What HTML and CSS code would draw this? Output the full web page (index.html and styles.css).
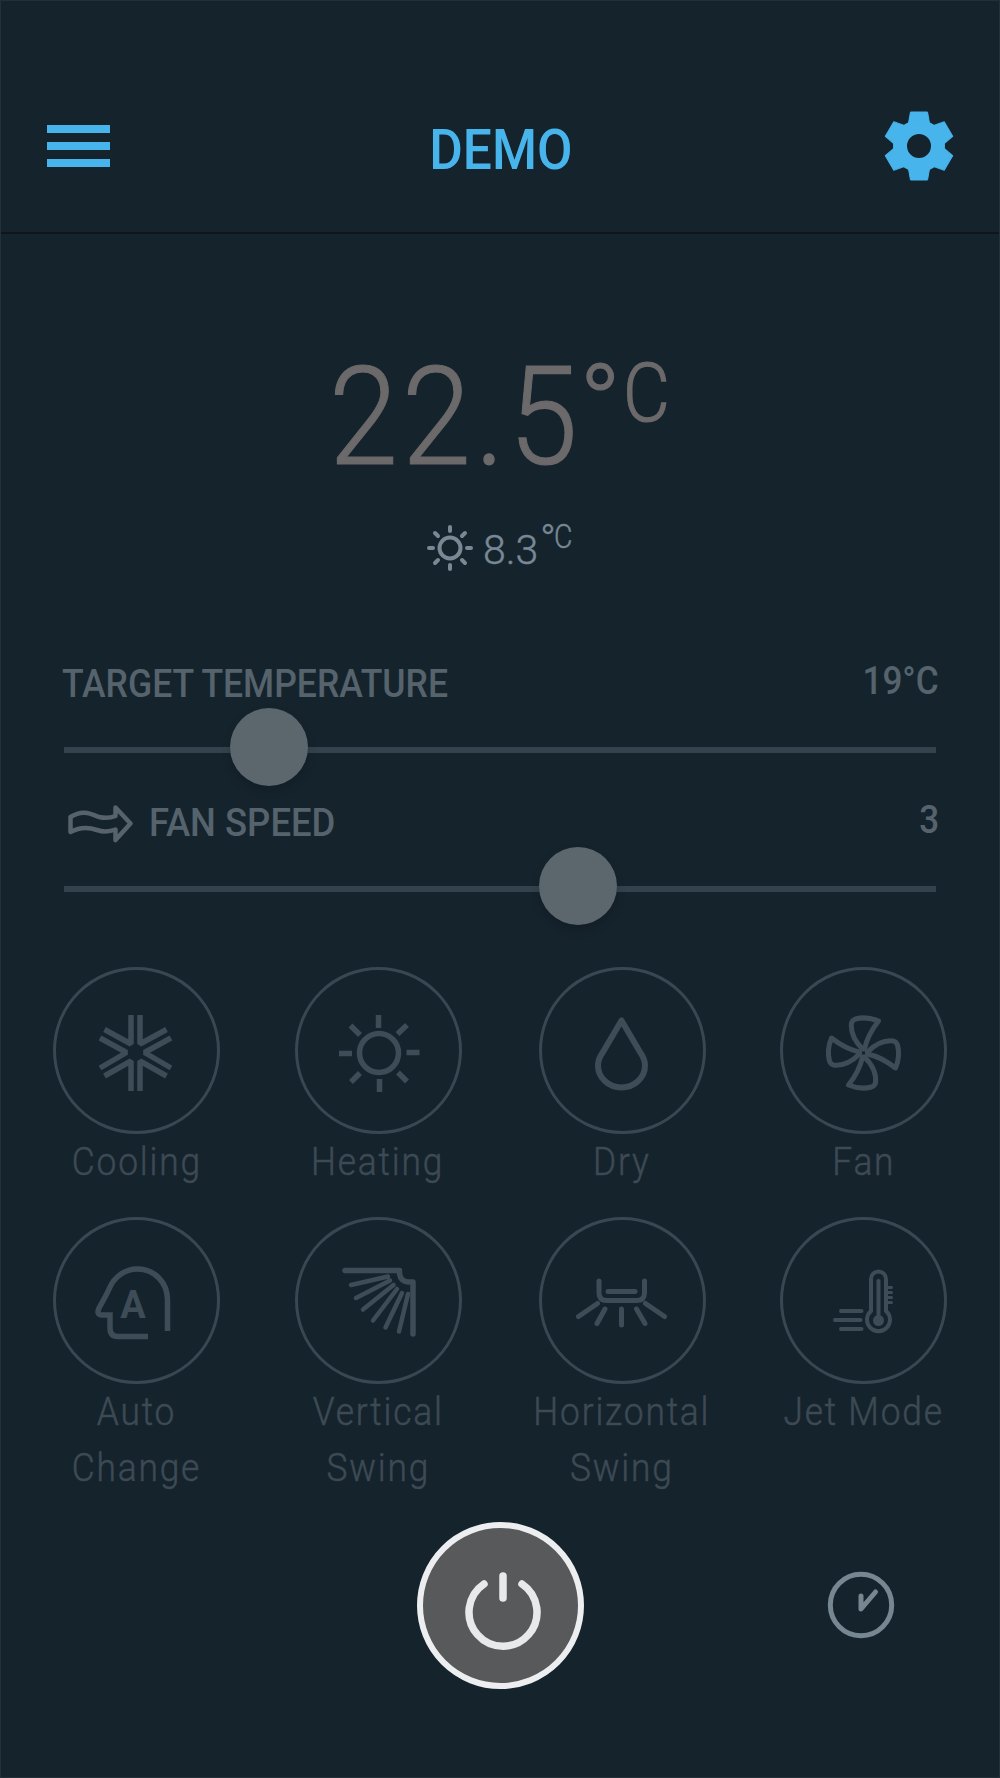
FILE: index.html
```html
<!DOCTYPE html>
<html lang="en">

<head>
    <meta charset="UTF-8">
    <meta name="viewport" content="width=device-width, initial-scale=1.0">
    <title>Demo</title>
    <link rel="stylesheet" href="styles.css">
</head>

<body>
    <div class="app">
        <header class="header">
            <button class="menu-btn" aria-label="Menu">
                <span></span>
                <span></span>
                <span></span>
            </button>
            <h1 class="title">DEMO</h1>
            <button class="settings-btn" aria-label="Settings">
                <svg width="70" height="70" viewBox="-35 -35 70 70">
                    <defs>
                        <path id="tooth" d="M-11 -20 L-8.5 -34 H8.5 L11 -20 Z" />
                    </defs>
                    <g fill="#47b4ec" stroke="#47b4ec" stroke-width="1" stroke-linejoin="round">
                        <use href="#tooth" />
                        <use href="#tooth" transform="rotate(60)" />
                        <use href="#tooth" transform="rotate(120)" />
                        <use href="#tooth" transform="rotate(180)" />
                        <use href="#tooth" transform="rotate(240)" />
                        <use href="#tooth" transform="rotate(300)" />
                    </g>
                    <circle r="19" fill="none" stroke="#47b4ec" stroke-width="14" />
                </svg>
            </button>
        </header>

        <!-- Current temperatures -->
        <section class="readings">
            <div class="indoor">
                <span class="indoor-value">22.5</span>
                <span class="indoor-degree">°</span>
                <span class="indoor-unit">C</span>
            </div>
            <div class="outdoor">
                <svg width="48" height="48" viewBox="-24 -24 48 48" fill="none" stroke="#788995" stroke-width="4" stroke-linecap="round">
                    <circle r="10.500" />
                    <path d="M0 -21V-17M0 17V21M-21 0H-17M17 0H21M-15 -15L-12 -12M15 -15L12 -12M-15 15L-12 12M15 15L12 12" />
                </svg>
                <span class="outdoor-value">8.3</span>
                <span class="outdoor-degree">°</span>
                <span class="outdoor-unit">C</span>
            </div>
        </section>

        <!-- Sliders -->
        <section class="sliders">
            <div class="slider">
                <div class="slider-head">
                    <span class="slider-label target">TARGET TEMPERATURE</span>
                    <span class="slider-value">19°C</span>
                </div>
                <div class="track">
                    <div class="knob" style="left: 23.55%"></div>
                </div>
            </div>
            <div class="slider">
                <div class="slider-head">
                    <svg class="wind" width="66" height="38" viewBox="0 0 66 38" fill="none" stroke="#56636c" stroke-width="4.500" stroke-linejoin="round">
                        <path d="M2.500 12C15 4 23 9 31 12Q40 14 47.500 11V2.500L62.500 18.500L47.500 35V24.500Q38 28 29 25Q15 20 2.500 27Z" />
                    </svg>
                    <span class="slider-label fan">FAN SPEED</span>
                    <span class="slider-value">3</span>
                </div>
                <div class="track">
                    <div class="knob" style="left: 58.9%"></div>
                </div>
            </div>
        </section>

        <!-- Modes -->
        <section class="modes">
            <div class="mode">
                <div class="circle">
                    <svg viewBox="0 0 166 166" stroke-width="5.500" stroke-linejoin="bevel">
                        <path d="M78 48V77L51.500 62.500M87 48V77L113.500 62.500M78 124V94L51.500 109M87 124V94L113.500 109M47 71L73.500 85.500L47 101M118 71L91.500 85.500L118 101" />
                    </svg>
                </div>
                <span class="mode-label">Cooling</span>
            </div>
            <div class="mode">
                <div class="circle">
                    <svg viewBox="0 0 166 166" stroke-width="5.500">
                        <circle cx="84" cy="86" r="19.500" />
                        <path d="M83.500 48V61M84.500 112V125M44 86.500H57M111.500 85.500H124.500M55.500 58.500L65 68M112 58L102.500 67M56 115L65 106M112 114.500L103 105.500" />
                    </svg>
                </div>
                <span class="mode-label">Heating</span>
            </div>
            <div class="mode">
                <div class="circle">
                    <svg viewBox="0 0 166 166" stroke-width="6" stroke-linejoin="round">
                        <path d="M82.500 53.500L64 85Q59 92 59 98.500A23.500 22 0 0 0 106 98.500Q106 92 101 85Z" />
                    </svg>
                </div>
                <span class="mode-label">Dry</span>
            </div>
            <div class="mode">
                <div class="circle">
                    <svg viewBox="0 0 166 166" stroke-width="5" stroke-linejoin="round">
                        <defs>
                            <path id="blade" d="M-1 -4C-10 -13 -13 -22 -12 -30Q-11 -33 -8 -34Q3 -37 15 -32Q4 -18 1 -4Z" />
                        </defs>
                        <g transform="translate(83.500 86)">
                            <use href="#blade" />
                            <use href="#blade" transform="rotate(90)" />
                            <use href="#blade" transform="rotate(180)" />
                            <use href="#blade" transform="rotate(270)" />
                        </g>
                    </svg>
                </div>
                <span class="mode-label">Fan</span>
            </div>
            <div class="mode">
                <div class="circle">
                    <svg viewBox="0 0 166 166" stroke-width="5.500">
                        <path d="M114.500 114V83C114.500 65 101 52 84.500 52C71 52 61 61 57 70Q54 77 46 91Q43 98 49 98H57V111Q57 119.500 65 119.500H95" />
                        <text class="icon-letter" x="80" y="101" text-anchor="middle">A</text>
                    </svg>
                </div>
                <span class="mode-label">Auto<br>Change</span>
            </div>
            <div class="mode">
                <div class="circle">
                    <svg viewBox="0 0 166 166" stroke-width="5.500" stroke-linecap="round" stroke-linejoin="round">
                        <path d="M50 53.500H104.500V57Q106 64.500 113 65H118V117" />
                        <path stroke-width="4.500" d="M93 59.500L56 68M95 63.500L61 81M98.500 68L68 92.500M102 72L78 103.500M107 76L90.500 110.500M113 77L104 114.500" />
                    </svg>
                </div>
                <span class="mode-label">Vertical<br>Swing</span>
            </div>
            <div class="mode">
                <div class="circle">
                    <svg viewBox="0 0 166 166" stroke-width="5" stroke-linecap="round">
                        <path d="M60 64V76Q60 83.500 68 83.500H97.500Q105.500 83.500 105.500 76V64M69 74.500H96M58.500 86.500L39.500 99.500M106.500 86.500L125.500 99.500M66 92L58 106.500M82.500 92V108M97.500 92L106 106.500" />
                    </svg>
                </div>
                <span class="mode-label">Horizontal<br>Swing</span>
            </div>
            <div class="mode">
                <div class="circle">
                    <svg viewBox="0 0 166 166" stroke-width="4" stroke-linecap="round">
                        <path d="M91 94V62A7.500 7.500 0 0 1 106 62V94A11.500 11.500 0 1 1 91 94Z" />
                        <path d="M98.500 64V103.500" />
                        <circle cx="98.500" cy="103.500" r="3" stroke-width="5" />
                        <path stroke-width="3" d="M107 70.500H111.500M107 75.500H111.500M107 80.500H111.500M107 85.500H111.500" />
                        <path d="M61 94H81.500M55 103H80.500M61 112H81.500" />
                    </svg>
                </div>
                <span class="mode-label">Jet Mode</span>
            </div>
        </section>

        <footer class="footer">
            <button class="power-btn" aria-label="Power">
                <svg width="84" height="84" viewBox="-42 -42 84 84" fill="none" stroke="#e8e9ea" stroke-width="7.500" stroke-linecap="round">
                    <path d="M-19 -28A34 34 0 1 0 19 -28M0 -36V-14" />
                </svg>
            </button>
            <button class="timer-btn" aria-label="Timer">
                <svg width="68" height="68" viewBox="-34 -34 68 68" fill="none" stroke="#768792" stroke-width="5" stroke-linecap="round" stroke-linejoin="round">
                    <circle r="30.700" />
                    <path d="M0 -9V4L14.500 -13" />
                </svg>
            </button>
        </footer>
    </div>
</body>

</html>
```
FILE: styles.css
```css
* {
    box-sizing: border-box;
}

body {
    margin: 0;
    background-color: #15232d;
    font-family: Roboto, Arial, sans-serif;
}

.app {
    width: 1000px;
    height: 1778px;
    overflow: hidden;
    border: 1px solid #22303a;
}

button {
    padding: 0;
    border: none;
    background: none;
    cursor: pointer;
}

svg {
    display: block;
}

/* Header */
.header {
    display: flex;
    justify-content: space-between;
    align-items: center;
    height: 233px;
    padding: 59px 45px 0 46px;
    border-bottom: 2px solid #0e161c;
}

.menu-btn {
    display: flex;
    flex-direction: column;
    gap: 9px;
    width: 63px;
}

.menu-btn span {
    height: 8px;
    background-color: #47b4ec;
}

.title {
    margin: 8px 0 0 8px;
    font-size: 56px;
    font-weight: 500;
    line-height: 60px;
    color: #47b4ec;
    transform: scaleX(0.92);
}

/* Current temperatures */
.readings {
    height: 400px;
    padding-top: 113px;
}

.indoor {
    display: flex;
    height: 150px;
    padding-left: 328px;
    color: #6c696a;
    font-weight: 300;
    -webkit-text-stroke: 1.2px #6c696a;
}

.indoor-value {
    width: 250px;
    font-size: 138px;
    line-height: 140px;
    letter-spacing: 4.5px;
    transform: scaleX(0.9);
    transform-origin: left;
}

.indoor-degree {
    width: 44px;
    font-size: 112px;
    line-height: 116px;
}

.indoor-unit {
    font-size: 82px;
    line-height: 92px;
    transform: scaleX(0.88);
    transform-origin: left;
}

.outdoor {
    display: flex;
    height: 60px;
    margin-top: 27px;
    padding-left: 425px;
    color: #788995;
    font-weight: 300;
    -webkit-text-stroke: 0.4px #788995;
}

.outdoor-value {
    width: 64px;
    margin-left: 9px;
    font-size: 41px;
    line-height: 53px;
}

.outdoor-degree {
    width: 14px;
    margin-left: -7px;
    font-size: 42px;
    line-height: 32px;
}

.outdoor-unit {
    font-size: 33px;
    line-height: 25px;
    transform: scaleX(0.86);
    transform-origin: left;
}

/* Sliders */
.sliders {
    padding: 19px 63px 0;
}

.slider {
    height: 139px;
}

.slider-head {
    display: flex;
    height: 94px;
    margin: 0 -3px 0 -2px;
    font-size: 39px;
    font-weight: 500;
    color: #56636c;
}

.slider-label {
    line-height: 62px;
    transform-origin: left;
    white-space: nowrap;
}

.target {
    transform: scaleX(0.911);
}

.fan {
    transform: scaleX(0.935);
}

.slider-value {
    margin-left: auto;
    line-height: 57px;
    transform: scaleX(0.9);
    transform-origin: right;
}

.wind {
    margin: 13px 15px 0 6px;
}

.track {
    position: relative;
    height: 6px;
    background-color: #33424c;
}

.knob {
    position: absolute;
    top: -39px;
    width: 78px;
    height: 78px;
    margin-left: -39px;
    border-radius: 50%;
    background-color: #5b666d;
    box-shadow: 0 5px 10px rgba(0, 0, 0, 0.15);
}

/* Modes */
.modes {
    display: grid;
    grid-template-columns: 241.7px 241.7px 246.8px 236.6px;
    grid-template-rows: 250px 305px;
    margin: 36px 0 0 14.5px;
}

.mode {
    display: flex;
    flex-direction: column;
    align-items: center;
}

.circle {
    width: 167px;
    height: 167px;
    border: 3px solid #384751;
    border-radius: 50%;
}

.circle svg {
    width: 166px;
    height: 166px;
    margin: -3px;
    fill: none;
    stroke: #3d4c56;
}

.circle .icon-letter {
    fill: #3d4c56;
    stroke: none;
    font-size: 38px;
    font-weight: 700;
}

.mode-label {
    font-size: 39px;
    font-weight: 300;
    line-height: 56px;
    letter-spacing: 2px;
    text-align: center;
    white-space: nowrap;
    color: #3d4a54;
    -webkit-text-stroke: 0.5px #3d4a54;
    transform: scaleX(0.905);
}

/* Footer */
.footer {
    display: grid;
    grid-template-columns: 1fr 167px 1fr;
    align-items: center;
}

.power-btn {
    grid-column: 2;
    display: flex;
    justify-content: center;
    align-items: center;
    width: 167px;
    height: 167px;
    border: 6px solid #eceef0;
    border-radius: 50%;
    background-color: #58595b;
}

.power-btn svg {
    margin: 12px 0 0 5px;
}

.timer-btn {
    justify-self: end;
    margin: 0 104px 2px 0;
}
```
